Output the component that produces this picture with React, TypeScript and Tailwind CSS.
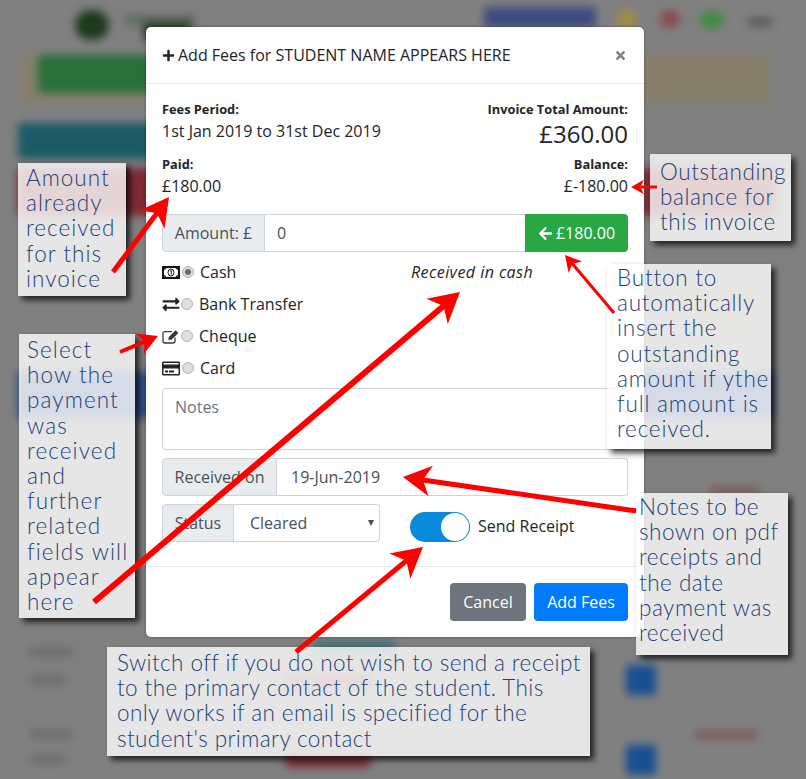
import { FaPlus, FaTimes, FaArrowLeft, FaExchangeAlt, FaRegCreditCard } from "react-icons/fa"

// blurred page behind the modal
const backdrop = [
  "left-[75px] top-[10px] w-[34px] h-[30px] rounded-full bg-[#1d3a1d]",
  "left-[125px] top-[15px] w-[70px] h-[10px] bg-[#5d6d5d]",
  "left-[143px] top-[22px] w-[48px] h-[18px] bg-[#2d3f2d]",
  "left-[484px] top-[7px] w-[112px] h-[20px] rounded bg-[#3c4a80]",
  "left-[617px] top-[10px] w-[20px] h-[18px] rounded-full bg-[#a08d45]",
  "left-[660px] top-[10px] w-[20px] h-[18px] rounded-full bg-[#8a4a50]",
  "left-[700px] top-[12px] w-[24px] h-[16px] rounded-full bg-[#3d8a40]",
  "left-[748px] top-[18px] w-[24px] h-[8px] bg-[#555555]",
  "left-[20px] top-[54px] w-[750px] h-[50px] bg-[#857f6a]",
  "left-[38px] top-[55px] w-[120px] h-[38px] rounded bg-[#27703a]",
  "left-[18px] top-[123px] w-[140px] h-[36px] rounded bg-[#1a5a66]",
  "left-[18px] top-[168px] w-[140px] h-[48px] rounded bg-[#7d2a32]",
  "left-[640px] top-[168px] w-[135px] h-[48px] rounded bg-[#7d2a32]",
  "left-[680px] top-[295px] w-[70px] h-[30px] bg-[#8a8268]",
  "left-[18px] top-[372px] w-[755px] h-[46px] bg-[#2d4d85]",
  "left-[710px] top-[487px] w-[50px] h-[8px] bg-[#7a5a5a]",
  "left-[315px] top-[640px] w-[80px] h-[14px] bg-[#4a7078]",
  "left-[285px] top-[675px] w-[85px] h-[14px] bg-[#8a4a50]",
  "left-[30px] top-[648px] w-[42px] h-[8px] bg-[#6a6a6a]",
  "left-[30px] top-[676px] w-[36px] h-[8px] bg-[#6a6a6a]",
  "left-[30px] top-[730px] w-[42px] h-[8px] bg-[#6a6a6a]",
  "left-[30px] top-[755px] w-[36px] h-[8px] bg-[#6a6a6a]",
  "left-[626px] top-[665px] w-[30px] h-[30px] rounded bg-[#174f90]",
  "left-[626px] top-[745px] w-[30px] h-[30px] rounded bg-[#174f90]",
  "left-[695px] top-[731px] w-[62px] h-[8px] bg-[#7a5a5a]",
  "left-[285px] top-[755px] w-[86px] h-[12px] rounded bg-[#7d2a32]",
]

const notes = [
  { cls: "left-[18px] top-[163px] w-[108px] h-[133px] pl-[8px] pt-[2px] tracking-[1px]", lines: ["Amount", "already", "received", "for this", "invoice"] },
  { cls: "left-[650px] top-[154px] w-[141px] h-[87px] pl-[10px] pt-[5px] tracking-[0.6px]", lines: ["Outstanding", "balance for", "this invoice"] },
  { cls: "left-[607px] top-[264px] w-[164px] h-[185px] pl-[10px] pt-[1px] tracking-[0.8px]", lines: ["Button to", "automatically", "insert the", "outstanding", "amount if ythe", "full amount is", "received."] },
  { cls: "left-[19px] top-[334px] w-[116px] h-[284px] pl-[8px] pt-[3px] tracking-[1.1px]", lines: ["Select", "how the", "payment", "was", "received", "and", "further", "related", "fields will", "appear", "here"] },
  { cls: "left-[636px] top-[493px] w-[152px] h-[162px] pl-[3px] pt-[1px] tracking-[0.5px]", lines: ["Notes to be", "shown on pdf", "receipts and", "the date", "payment was", "received"] },
  { cls: "left-[107px] top-[647px] w-[483px] h-[109px] pl-[10px] pt-[3px] tracking-[0.4px]", lines: ["Switch off if you do not wish to send a receipt", "to the primary contact of the student. This", "only works if an email is specified for the", "student's primary contact"] },
]

function Arrow({ x1, y1, x2, y2, w, head }: { x1: number; y1: number; x2: number; y2: number; w: number; head: number }) {
  const a = Math.atan2(y2 - y1, x2 - x1)
  const p = (d: number, s: number) => `${x2 - d * Math.cos(a) - s * Math.sin(a)},${y2 - d * Math.sin(a) + s * Math.cos(a)}`
  const neck = head * 0.72
  return (
    <g fill="#ff0000">
      <line x1={x1} y1={y1} x2={x2 - neck * Math.cos(a)} y2={y2 - neck * Math.sin(a)} stroke="#ff0000" strokeWidth={w} />
      <polygon points={`${x2},${y2} ${p(head, head * 0.55)} ${p(neck, 0)} ${p(head, -head * 0.55)}`} />
    </g>
  )
}

function Radio({ on }: { on?: boolean }) {
  return (
    <span className="flex h-[12px] w-[12px] shrink-0 items-center justify-center rounded-full border border-[#b5b5b5] bg-[#dedede]">
      {on && <span className="h-[6px] w-[6px] rounded-full bg-[#6a6a6a]" />}
    </span>
  )
}

function CashIcon() {
  return (
    <svg width="18" height="13" viewBox="0 0 18 13" className="shrink-0">
      <rect x="1" y="1" width="16" height="11" fill="#fff" stroke="#111" strokeWidth="2" />
      <path d="M2 3.5 L4 2 M14 2 L16 3.5 M2 9.5 L4 11 M14 11 L16 9.5" stroke="#111" strokeWidth="1.5" />
      <ellipse cx="9" cy="6.5" rx="3" ry="3.5" fill="none" stroke="#111" strokeWidth="1" />
      <path d="M8.3 5 L9.3 4.6 V8.5" fill="none" stroke="#111" strokeWidth="1" />
    </svg>
  )
}

function ChequeIcon() {
  return (
    <svg width="18" height="15" viewBox="0 0 18 15" className="shrink-0">
      <path d="M10 2.6 H3 Q1 2.6 1 4.6 V12 Q1 14 3 14 H11 Q13 14 13 12 V8.5" fill="none" stroke="#343a40" strokeWidth="1.3" />
      <path d="M6.2 10.8 L6.8 8 L13.6 1.2 L16.4 4 L9.6 10.8 Z" fill="#343a40" />
    </svg>
  )
}

export default function App() {
  return (
    <div className="relative h-[779px] w-[806px] overflow-hidden bg-[#808080] font-['Open_Sans',sans-serif] text-[#212529]">
      <div className="absolute inset-0 blur-[4px]">
        {backdrop.map((c) => (
          <div key={c} className={`absolute ${c}`} />
        ))}
      </div>

      {/* Modal */}
      <div className="absolute left-[146px] top-[27px] w-[498px] rounded-[5px] bg-white shadow-[0_0_3px_rgba(0,0,0,0.4)]">
        <div className="flex h-[57px] items-center justify-between border-b border-[#e9ecef] pl-4 pr-[18px]">
          <h5 className="flex items-center text-[16px]">
            <FaPlus className="mr-[3px] h-[13px] w-[13px]" />
            Add Fees for STUDENT NAME APPEARS HERE
          </h5>
          <FaTimes className="h-[13px] w-[11px] text-[#808080]" />
        </div>

        <div className="h-[482px] px-4 pt-4">
          <div className="flex justify-between">
            <div>
              <div className="text-[12.8px] font-bold leading-[18px]">Fees Period:</div>
              <div className="text-[16px] leading-[26px]">1st Jan 2019 to 31st Dec 2019</div>
            </div>
            <div className="text-right">
              <div className="text-[12.8px] font-bold leading-[18px]">Invoice Total Amount:</div>
              <div className="text-[24px] leading-[32px]">£360.00</div>
            </div>
          </div>
          <div className="mt-[5px] flex justify-between">
            <div>
              <div className="text-[12.8px] font-bold leading-[18px]">Paid:</div>
              <div className="text-[16px] leading-[26px]">£180.00</div>
            </div>
            <div className="text-right">
              <div className="text-[12.8px] font-bold leading-[18px]">Balance:</div>
              <div className="text-[16px] leading-[26px]">£-180.00</div>
            </div>
          </div>

          <div className="mt-[15px] flex h-[38px] text-[16px] text-[#495057]">
            <span className="flex w-[103px] items-center justify-center rounded-l border border-[#ced4da] bg-[#e9ecef]">Amount: £</span>
            <span className="flex flex-1 items-center border-y border-[#ced4da] pl-[12px]">0</span>
            <button className="flex w-[103px] items-center justify-center gap-[3px] rounded-r bg-[#28a745] text-white">
              <FaArrowLeft className="h-[15px] w-[15px]" />
              £180.00
            </button>
          </div>

          <div className="mt-[4px] flex flex-col text-[16px]">
            <div className="flex h-[32px] items-center">
              <CashIcon />
              <span className="ml-[2px]"><Radio on /></span>
              <span className="ml-[6px] w-[211px]">Cash</span>
              <span className="italic tracking-[0.45px]">Received in cash</span>
            </div>
            <div className="flex h-[32px] items-center">
              <FaExchangeAlt className="h-[17px] w-[18px]" />
              <span className="ml-[1px]"><Radio /></span>
              <span className="ml-[6px]">Bank Transfer</span>
            </div>
            <div className="flex h-[32px] items-center">
              <ChequeIcon />
              <span className="ml-[1px]"><Radio /></span>
              <span className="ml-[6px]">Cheque</span>
            </div>
            <div className="flex h-[32px] items-center">
              <FaRegCreditCard className="h-[17px] w-[18px]" />
              <span className="ml-[2px]"><Radio /></span>
              <span className="ml-[6px]">Card</span>
            </div>
          </div>

          <div className="mt-[4px] h-[62px] rounded border border-[#ced4da] px-[12px] py-[6px] text-[16px] text-[#6c757d]">Notes</div>

          <div className="mt-[8px] flex h-[38px] text-[16px] text-[#495057]">
            <span className="flex w-[115px] items-center justify-center rounded-l border border-[#ced4da] bg-[#e9ecef]">Received on</span>
            <span className="flex flex-1 items-center rounded-r border border-l-0 border-[#ced4da] pl-[14px]">19-Jun-2019</span>
          </div>

          <div className="mt-[8px] flex items-start">
            <div className="flex h-[38px] w-[218px] text-[16px] text-[#495057]">
              <span className="flex w-[72px] items-center justify-center rounded-l border border-[#ced4da] bg-[#e9ecef]">Status</span>
              <span className="relative flex flex-1 items-center rounded-r border border-l-0 border-[#ced4da] pl-[16px]">
                Cleared
                <span className="absolute right-[5px] top-[15px] h-0 w-0 border-x-[3px] border-t-[6px] border-x-transparent border-t-[#495057]" />
              </span>
            </div>
            <div className="ml-[30px] mt-[8px] flex h-[30px] w-[60px] items-center justify-end rounded-full bg-[#0a8ad8]">
              <span className="mr-px h-[28px] w-[28px] rounded-full bg-white" />
            </div>
            <span className="ml-[8px] mt-[11px] text-[16px] leading-[22px]">Send Receipt</span>
          </div>
        </div>

        <div className="flex h-[71px] items-center justify-end gap-[8px] border-t border-[#e9ecef] px-4 text-[16px] text-white">
          <button className="h-[38px] w-[76px] rounded bg-[#6c757d]">Cancel</button>
          <button className="h-[38px] w-[94px] rounded bg-[#007bff]">Add Fees</button>
        </div>
      </div>

      {/* Annotations */}
      {notes.map((n) => (
        <div
          key={n.lines[0]}
          className={`absolute bg-white/80 font-['Lato',sans-serif] text-[22.5px] font-light leading-[25.2px] text-[#1f3f78] shadow-[4px_4px_6px_rgba(0,0,0,0.75)] ${n.cls}`}
        >
          {n.lines.map((l) => (
            <div key={l} className="whitespace-nowrap">{l}</div>
          ))}
        </div>
      ))}

      <svg className="pointer-events-none absolute inset-0" width="806" height="779">
        <Arrow x1={113} y1={272} x2={169} y2={197} w={5} head={28} />
        <Arrow x1={657} y1={187} x2={631} y2={187} w={3} head={13} />
        <Arrow x1={614} y1={313} x2={565} y2={255} w={3} head={16} />
        <Arrow x1={120} y1={352} x2={158} y2={336} w={4} head={20} />
        <Arrow x1={94} y1={602} x2={460} y2={292} w={6} head={30} />
        <Arrow x1={636} y1={511} x2={403} y2={477} w={5} head={28} />
        <Arrow x1={296} y1={652} x2={423} y2={547} w={5} head={30} />
      </svg>
    </div>
  )
}
